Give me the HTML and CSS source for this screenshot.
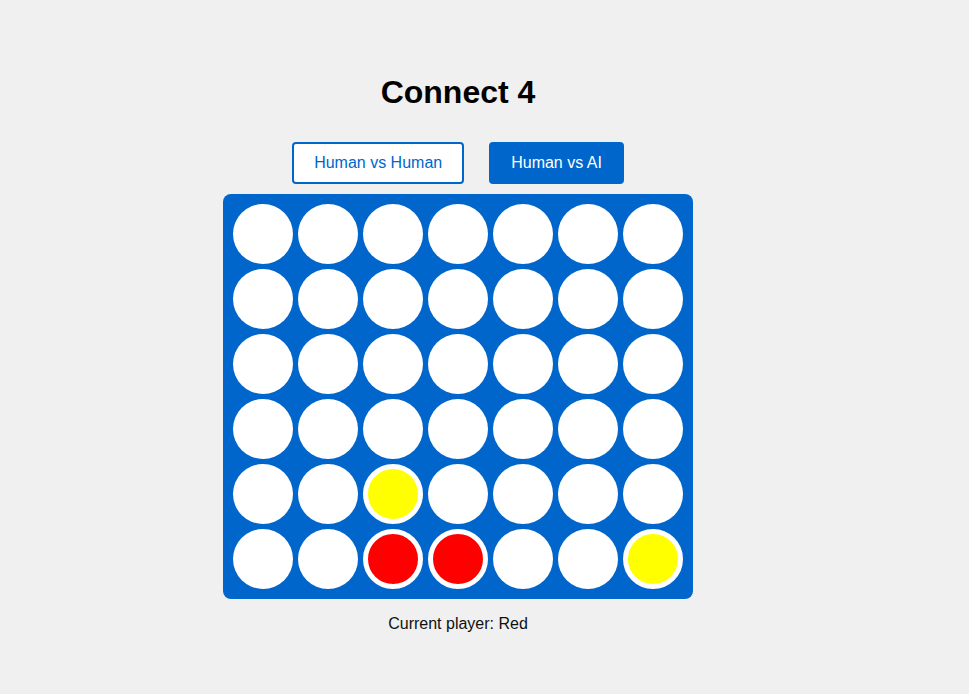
FILE: index.html
```html
<!DOCTYPE html>
<html>
<head>
<meta charset="utf-8">
<title>Connect 4</title>
<link rel="stylesheet" href="styles.css">
</head>
<body>
<div class="app">
  <h1 class="title">Connect 4</h1>
  <div class="modes">
    <button class="mode">Human vs Human</button>
    <button class="mode active">Human vs AI</button>
  </div>
  <div class="board">
    <div class="cell"></div><div class="cell"></div><div class="cell"></div><div class="cell"></div><div class="cell"></div><div class="cell"></div><div class="cell"></div>
    <div class="cell"></div><div class="cell"></div><div class="cell"></div><div class="cell"></div><div class="cell"></div><div class="cell"></div><div class="cell"></div>
    <div class="cell"></div><div class="cell"></div><div class="cell"></div><div class="cell"></div><div class="cell"></div><div class="cell"></div><div class="cell"></div>
    <div class="cell"></div><div class="cell"></div><div class="cell"></div><div class="cell"></div><div class="cell"></div><div class="cell"></div><div class="cell"></div>
    <div class="cell"></div><div class="cell"></div><div class="cell yellow"></div><div class="cell"></div><div class="cell"></div><div class="cell"></div><div class="cell"></div>
    <div class="cell"></div><div class="cell"></div><div class="cell red"></div><div class="cell red"></div><div class="cell"></div><div class="cell"></div><div class="cell yellow"></div>
  </div>
  <p class="status">Current player: Red</p>
</div>
</body>
</html>
```

FILE: styles.css
```css
html, body {
  background: #f0f0f0;
}
body {
  margin: 8px;
  font-family: "Liberation Sans", Arial, sans-serif;
}
.app {
  width: 900px;
  padding-top: 45px;
  text-align: center;
}
.title {
  font-size: 32px;
  font-weight: bold;
  margin: 21px 0 31px;
  color: #000;
}
.modes {
  display: flex;
  justify-content: center;
  gap: 25px;
  margin-bottom: 10px;
}
.mode {
  font-family: "Liberation Sans", Arial, sans-serif;
  font-size: 16px;
  padding: 10px 20px;
  border: 2px solid #0066cc;
  border-radius: 4px;
  background: #ffffff;
  color: #0066cc;
  line-height: 18px;
}
.mode.active {
  background: #0066cc;
  color: #ffffff;
}
.board {
  display: inline-grid;
  grid-template-columns: repeat(7, 60px);
  grid-auto-rows: 60px;
  gap: 5px;
  padding: 10px;
  background: #0066cc;
  border-radius: 8px;
  vertical-align: top;
}
.cell {
  width: 60px;
  height: 60px;
  border-radius: 50%;
  background: #ffffff;
  box-sizing: border-box;
}
.cell.red {
  background: #ff0000;
  border: 5px solid #ffffff;
}
.cell.yellow {
  background: #ffff00;
  border: 5px solid #ffffff;
}
.status {
  margin: 16px 0 0;
  font-size: 16px;
  color: #111;
}
```
